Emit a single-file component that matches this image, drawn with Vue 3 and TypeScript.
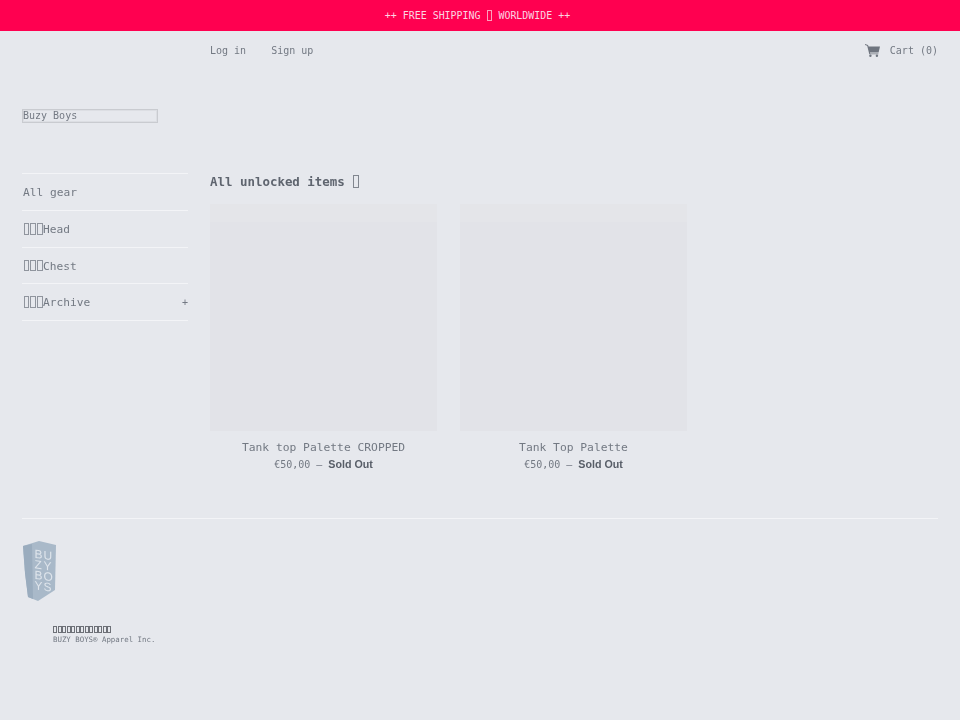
<script setup lang="ts">
const navItems = [
  { label: 'All gear', boxes: 0, more: false },
  { label: 'Head', boxes: 3, more: false },
  { label: 'Chest', boxes: 3, more: false },
  { label: 'Archive', boxes: 3, more: true },
]

const products = [
  { name: 'Tank top Palette CROPPED', price: '€50,00' },
  { name: 'Tank Top Palette', price: '€50,00' },
]
</script>

<template>
  <div class="page">
    <div class="banner">++ FREE SHIPPING <i class="box"></i> WORLDWIDE ++</div>

    <div class="layout">
      <aside class="sidebar">
        <div class="logo-box">Buzy Boys</div>
        <nav class="side-nav">
          <a v-for="item in navItems" :key="item.label" class="side-link">
            <span><i v-for="n in item.boxes" :key="n" class="box"></i>{{ item.label }}</span>
            <span v-if="item.more" class="plus">+</span>
          </a>
        </nav>
      </aside>

      <main class="content">
        <div class="account-bar">
          <div class="account-links">
            <a>Log in</a>
            <a>Sign up</a>
          </div>
          <a class="cart">
            <svg class="cart-icon" viewBox="0 0 15 13" width="15" height="13">
              <path d="M0 0 3 1 3.6 2.6H15L13.6 8.4H5L5.2 9.4H13.4V10.3H4.3L2.2 1.8 0 1Z" fill="#6f757f" />
              <circle cx="5.4" cy="11.8" r="1.2" fill="#6f757f" />
              <circle cx="11.9" cy="11.8" r="1.2" fill="#6f757f" />
            </svg>
            <span>Cart (0)</span>
          </a>
        </div>

        <h1 class="title">All unlocked items <i class="box"></i></h1>

        <div class="products">
          <div v-for="p in products" :key="p.name" class="product">
            <div class="thumb"></div>
            <div class="product-name">{{ p.name }}</div>
            <div class="product-price">{{ p.price }} — <strong>Sold Out</strong></div>
          </div>
        </div>
      </main>
    </div>

    <footer class="footer">
      <svg class="footer-logo" viewBox="0 0 34 60" width="34" height="60">
        <path d="M1 5 17 0 34 4 33 49 16 60 6 56 3 32Z" fill="#a9b9c9" />
        <path d="M1 5 10 3 11 58 6 56 3 32Z" fill="#9aacbe" />
        <g class="logo-letters" fill="#dfe5ec" transform="skewY(8)">
          <text x="12.5" y="15">B</text>
          <text x="21.5" y="15">U</text>
          <text x="12.5" y="25.5">Z</text>
          <text x="21.5" y="25.5">Y</text>
          <text x="12.5" y="36">B</text>
          <text x="21.5" y="36">O</text>
          <text x="12.5" y="46.5">Y</text>
          <text x="21.5" y="46.5">S</text>
        </g>
      </svg>
      <div class="footer-text">
        <div class="footer-boxes"><i v-for="n in 13" :key="n" class="box"></i></div>
        <div>BUZY BOYS® Apparel Inc.</div>
      </div>
    </footer>
  </div>
</template>

<style>
body {
  background: #e6e8ed;
}
</style>

<style scoped>
.page {
  min-height: 720px;
  background: #e6e8ed;
  color: #737983;
  font-family: "DejaVu Sans Mono", "Liberation Mono", monospace;
  font-size: 10px;
}

/* missing-glyph box, one character cell wide */
.box {
  display: inline-block;
  box-sizing: border-box;
  width: 0.5em;
  height: 1.05em;
  margin: 0 0.05em;
  border: 1px solid currentColor;
  vertical-align: -0.17em;
  opacity: 0.75;
}

.banner {
  height: 31px;
  line-height: 31px;
  padding-right: 5px;
  background: #ff0050;
  color: #fbd5e2;
  text-align: center;
  font-size: 9.95px;
}

.layout {
  display: grid;
  grid-template-columns: 166px 1fr;
  column-gap: 22px;
  padding: 0 22px;
  will-change: opacity;
}

.sidebar {
  padding-top: 78px;
}

.logo-box {
  box-sizing: border-box;
  width: 136px;
  height: 14px;
  border: 1px solid #c9cbd0;
  box-shadow: inset 0 0 0 1px #dcdee3;
  line-height: 12px;
  margin-bottom: 50px;
}

.side-nav {
  border-top: 1px solid #f3f4f7;
}

.side-link {
  display: flex;
  justify-content: space-between;
  height: 35.75px;
  line-height: 37px;
  border-bottom: 1px solid #f3f4f7;
  padding-left: 1px;
  font-size: 11.2px;
}

.plus {
  font-size: 10px;
}

.account-bar {
  display: flex;
  justify-content: space-between;
  align-items: center;
  height: 38px;
}

.account-links {
  display: flex;
  gap: 25px;
}

.cart {
  display: flex;
  align-items: center;
  gap: 10px;
}

.title {
  margin: 105px 0 0;
  height: 30px;
  font-size: 12.45px;
  line-height: 16px;
  font-weight: 700;
  color: #5f656f;
}

.products {
  display: flex;
  gap: 23px;
}

.product {
  width: 227px;
  text-align: center;
}

.thumb {
  height: 227px;
  background: linear-gradient(#e4e5e9 0, #e4e5e9 18px, #e2e3e8 18px);
  margin-bottom: 9px;
}

.product-name {
  line-height: 15px;
  font-size: 11.3px;
}

.product-price {
  margin-top: 2px;
  line-height: 15px;
}

.product-price strong {
  font-family: "Liberation Sans", Arial, sans-serif;
  font-size: 10.7px;
  color: #585e68;
}

.footer {
  margin: 46px 22px 0;
  padding-top: 22px;
  border-top: 1px solid #f3f4f7;
  will-change: opacity;
}

.footer-logo {
  display: block;
}

.logo-letters {
  font-family: "Liberation Sans", Arial, sans-serif;
  font-size: 12px;
}

.footer-text {
  margin: 24px 0 0 31px;
  font-size: 7.4px;
  line-height: 11px;
}

.footer-boxes {
  color: #44484f;
  font-size: 8px;
  line-height: 9px;
}

.footer-boxes .box {
  width: 4px;
  height: 7px;
  margin: 0 0.5px 0 0;
  vertical-align: -1px;
}
</style>
